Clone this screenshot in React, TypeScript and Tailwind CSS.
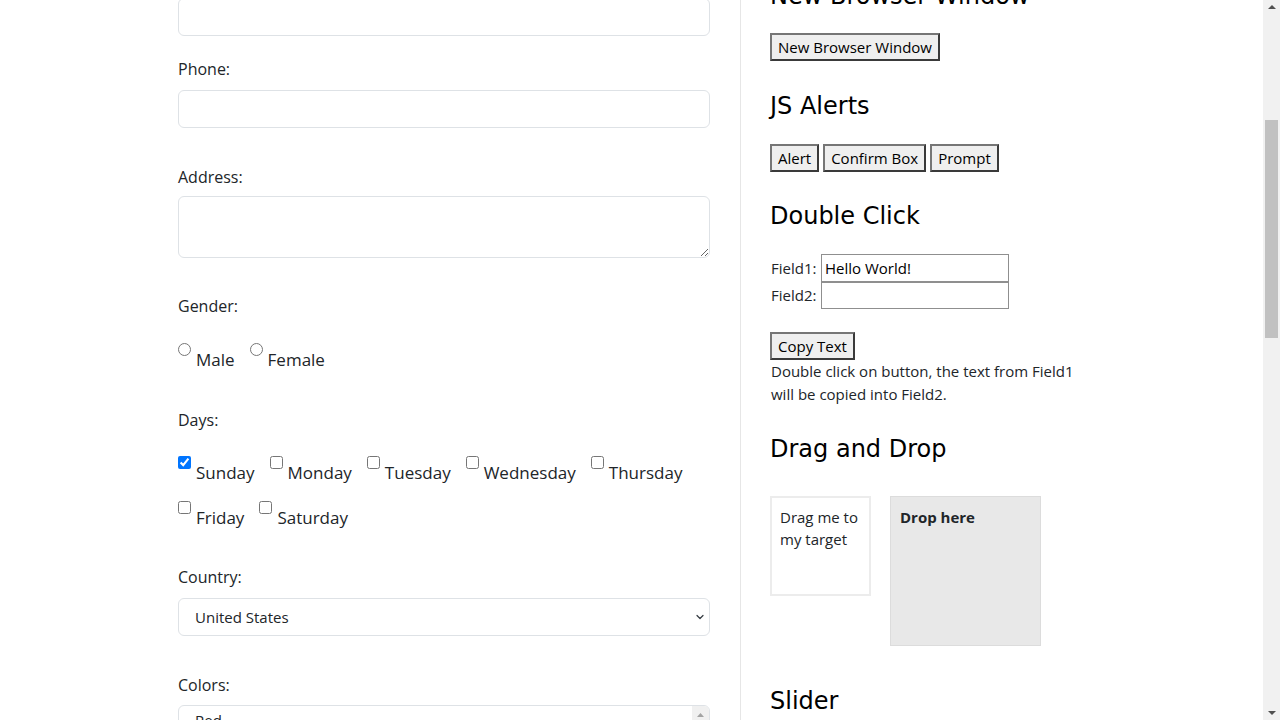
import React from 'react';

const sans = { fontFamily: '"Open Sans", "Noto Sans", Arial, sans-serif' };

function Check({ label, checked, type = 'checkbox', name }: { label: string; checked?: boolean; type?: string; name?: string }) {
  return (
    <label className="flex items-start mr-[15px]">
      <input
        type={type}
        name={name}
        defaultChecked={checked}
        className="m-0 mr-[5px] w-[13px] h-[13px] accent-[#0075ff]"
      />
      <span className="mt-[5px] text-[17px] leading-[24px] text-[#212529]">{label}</span>
    </label>
  );
}

function Btn({ children }: { children: React.ReactNode }) {
  return (
    <button className="h-[28px] px-[6px] text-[15px] leading-[22px] text-black bg-[#efefef] border-2 border-t-[#767676] border-l-[#767676] border-r-[#3a3a3a] border-b-[#3a3a3a]">
      {children}
    </button>
  );
}

function Heading({ children, className = '' }: { children: React.ReactNode; className?: string }) {
  return (
    <h2
      className={'text-[24px] leading-[28px] font-normal text-black ' + className}
      style={{ fontFamily: '"DejaVu Sans", Verdana, sans-serif' }}
    >
      {children}
    </h2>
  );
}

export default function App() {
  const days1 = ['Monday', 'Tuesday', 'Wednesday', 'Thursday'];

  return (
    <div className="h-[720px] overflow-hidden flex bg-white" style={sans}>
      <div className="flex-1 flex pl-[178px]">
        {/* form column */}
        <div className="w-[563px] pr-[30px] border-r border-[#e6e6e6]">
          <div className="-mt-[2px] text-[#212529]">
            <input className="block w-full h-[38px] border border-[#dee2e6] rounded-[6px]" />

            <div className="mt-[21px] mb-[9px] text-[16px] leading-[24px]">Phone:</div>
            <input className="block w-full h-[38px] border border-[#dee2e6] rounded-[6px]" />

            <div className="mt-[37px] mb-[7px] text-[16px] leading-[24px]">Address:</div>
            <textarea className="block w-full h-[62px] border border-[#dee2e6] rounded-[6px]" />

            <div className="mt-[36px] text-[16px] leading-[24px]">Gender:</div>
            <div className="flex mt-[25px]">
              <Check type="radio" name="gender" label="Male" />
              <Check type="radio" name="gender" label="Female" />
            </div>

            <div className="mt-[36px] text-[16px] leading-[24px]">Days:</div>
            <div className="flex mt-[24px]">
              <Check label="Sunday" checked />
              {days1.map((d) => (
                <Check key={d} label={d} />
              ))}
            </div>
            <div className="flex mt-[16px]">
              <Check label="Friday" />
              <Check label="Saturday" />
            </div>

            <div className="mt-[35px] mb-[9px] text-[16px] leading-[24px]">Country:</div>
            <div className="relative">
              <select className="block w-full h-[38px] pl-[16px] border border-[#dee2e6] rounded-[6px] appearance-none bg-white text-[15px] text-[#212529]">
                <option>United States</option>
                <option>Canada</option>
                <option>United Kingdom</option>
              </select>
              <svg className="absolute right-[5px] top-[15px] pointer-events-none" width="10" height="8" viewBox="0 0 16 16">
                <path d="M2 5l6 6 6-6" fill="none" stroke="#343a40" strokeWidth="2.4" strokeLinecap="round" strokeLinejoin="round" />
              </svg>
            </div>

            <div className="mt-[37px] mb-[8px] text-[16px] leading-[24px]">Colors:</div>
            <div className="flex h-[80px] border border-[#dee2e6] rounded-t-[6px] overflow-hidden">
              <div className="flex-1 pl-[16px] pt-[3px] text-[15px] leading-[22px]">
                <div>Red</div>
                <div>Blue</div>
                <div>Green</div>
              </div>
              <div className="w-[17px] bg-[#f0f0f0] flex justify-center pt-[7px]">
                <svg width="7" height="4" viewBox="0 0 7 4">
                  <path d="M0 4L3.5 0L7 4Z" fill="#a3a3a3" />
                </svg>
              </div>
            </div>
          </div>
        </div>

        {/* widgets column */}
        <div className="pl-[29px] text-[15px] text-black">
          <div className="-mt-[18px]">
            <Heading className="mb-[23px]">New Browser Window</Heading>
            <Btn>New Browser Window</Btn>

            <Heading className="mt-[31px] mb-[24px]">JS Alerts</Heading>
            <div className="flex gap-[4px]">
              <Btn>Alert</Btn>
              <Btn>Confirm Box</Btn>
              <Btn>Prompt</Btn>
            </div>

            <Heading className="mt-[30px] mb-[24px]">Double Click</Heading>
            <div className="flex flex-col">
              <div className="flex items-center">
                <span className="w-[51px] pl-[1px] text-[#212529]">Field1:</span>
                <input defaultValue="Hello World!" className="w-[188px] h-[28px] px-[3px] border border-[#8f8f8f] text-[15px] text-black" />
              </div>
              <div className="flex items-center">
                <span className="w-[51px] pl-[1px] text-[#212529]">Field2:</span>
                <input className="w-[188px] h-[27px] border border-[#8f8f8f]" />
              </div>
            </div>
            <div className="mt-[23px]">
              <Btn>Copy Text</Btn>
            </div>
            <p className="w-[320px] pl-[1px] leading-[23px] text-[#212529]">
              Double click on button, the text from Field1 will be copied into Field2.
            </p>

            <Heading className="mt-[29px] mb-[33px]">Drag and Drop</Heading>
            <div className="flex items-start">
              <div className="w-[101px] h-[100px] border-2 border-[#ececec] px-[8px] pt-[8px] leading-[22px] text-[#212529]">
                Drag me to my target
              </div>
              <div className="ml-[19px] w-[151px] h-[150px] bg-[#e8e8e8] border border-[#dcdcdc] px-[9px] pt-[9px] leading-[22px] font-bold text-[#212529]">
                Drop here
              </div>
            </div>

            <Heading className="mt-[41px]">Slider</Heading>
          </div>
        </div>
      </div>

      {/* page scrollbar */}
      <div className="w-[17px] bg-[#f1f1f1] flex flex-col items-center">
        <svg className="mt-[5px]" width="8" height="4" viewBox="0 0 8 4">
          <path d="M0 4L4 0L8 4Z" fill="#505050" />
        </svg>
        <div className="mt-[111px] w-[13px] h-[218px] bg-[#c1c1c1]" />
        <div className="flex-1" />
        <svg className="mb-[5px]" width="8" height="4" viewBox="0 0 8 4">
          <path d="M0 0L8 0L4 4Z" fill="#505050" />
        </svg>
      </div>
    </div>
  );
}
